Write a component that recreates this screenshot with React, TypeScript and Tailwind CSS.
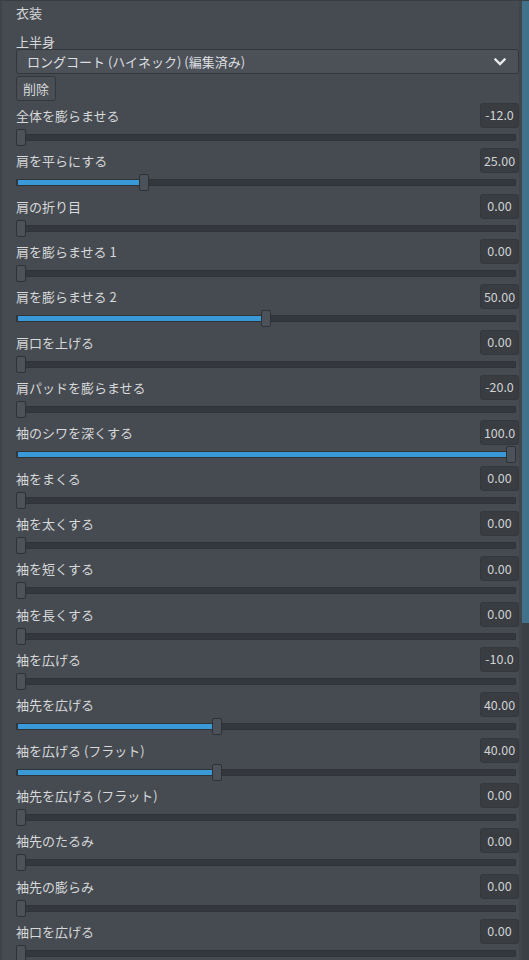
import React from "react";

type Row = { label: string; value: string; pct: number };

const rows: Row[] = [
  { label: "全体を膨らませる", value: "-12.0", pct: 0 },
  { label: "肩を平らにする", value: "25.00", pct: 25 },
  { label: "肩の折り目", value: "0.00", pct: 0 },
  { label: "肩を膨らませる 1", value: "0.00", pct: 0 },
  { label: "肩を膨らませる 2", value: "50.00", pct: 50 },
  { label: "肩口を上げる", value: "0.00", pct: 0 },
  { label: "肩パッドを膨らませる", value: "-20.0", pct: 0 },
  { label: "袖のシワを深くする", value: "100.0", pct: 100 },
  { label: "袖をまくる", value: "0.00", pct: 0 },
  { label: "袖を太くする", value: "0.00", pct: 0 },
  { label: "袖を短くする", value: "0.00", pct: 0 },
  { label: "袖を長くする", value: "0.00", pct: 0 },
  { label: "袖を広げる", value: "-10.0", pct: 0 },
  { label: "袖先を広げる", value: "40.00", pct: 40 },
  { label: "袖を広げる (フラット)", value: "40.00", pct: 40 },
  { label: "袖先を広げる (フラット)", value: "0.00", pct: 0 },
  { label: "袖先のたるみ", value: "0.00", pct: 0 },
  { label: "袖先の膨らみ", value: "0.00", pct: 0 },
  { label: "袖口を広げる", value: "0.00", pct: 0 },
];

function SliderRow({ row }: { row: Row }) {
  const trackW = 500;
  const handleW = 10;
  const left = (row.pct / 100) * (trackW - handleW);
  return (
    <div className="flex flex-col h-[45.33px] shrink-0">
      <div className="flex items-center justify-between h-[25px] shrink-0">
        <span className="text-[13px] text-[#d6d8da] leading-none">{row.label}</span>
        <div className="w-[39px] h-[25px] rounded-[3px] bg-[#393d42] border border-[#34383c] flex items-center justify-center text-[12.5px] text-[#d0d2d4] leading-none">
          {row.value}
        </div>
      </div>
      <div className="relative mt-[1px] h-[17px] w-[500px] shrink-0">
        <div className="absolute left-0 right-0 top-[5px] h-[7px] bg-[#34383d] border border-[#2f3337] rounded-[1px]" />
        {row.pct > 0 && (
          <div
            className="absolute left-[2px] top-[6px] h-[5px] bg-[#3a9ad8]"
            style={{ width: `${left}px` }}
          />
        )}
        <div
          className="absolute top-0 h-[17px] w-[10px] rounded-[2px] bg-[#4c5259] border border-[#2e3236]"
          style={{ left: `${left}px` }}
        />
      </div>
    </div>
  );
}

export default function App() {
  return (
    <div
      className="w-[529px] h-[960px] overflow-hidden bg-[#464b51] flex border-t border-[#3a3e43]"
      style={{ fontFamily: '"Noto Sans CJK JP", "Noto Sans", sans-serif' }}
    >
      <div className="w-[2px] bg-[#3f4449] shrink-0" />
      <div className="flex flex-col pl-[14px] w-[517px] shrink-0">
        <div className="h-[23px] shrink-0 flex items-center text-[13px] text-[#d6d8da]">衣装</div>
        <div className="mt-[11px] h-[14px] shrink-0 flex items-center text-[13px] text-[#d6d8da]">上半身</div>
        <div className="h-[25px] shrink-0 w-[503px] rounded-[3px] bg-[#4c5158] border border-[#33373b] flex items-center justify-between pl-[10px] pr-[12px]">
          <span className="text-[13px] text-[#dcdee0] leading-none">ロングコート (ハイネック) (編集済み)</span>
          <svg width="12" height="8" viewBox="0 0 12 8">
            <path d="M1.5 1.5 L6 6 L10.5 1.5" stroke="#e6e8ea" strokeWidth="2.4" fill="none" strokeLinecap="square" />
          </svg>
        </div>
        <div className="mt-[2px] h-[25px] shrink-0 w-[40px] rounded-[3px] bg-[#4a4f56] border border-[#33373b] flex items-center justify-center text-[13px] text-[#d6d8da] leading-none">
          削除
        </div>
        <div className="mt-[2px] flex flex-col shrink-0">
          {rows.map((r, i) => (
            <SliderRow key={i} row={r} />
          ))}
        </div>
      </div>
      <div className="w-[3px] bg-[#40454a] shrink-0" />
      <div className="w-[7px] shrink-0 flex flex-col">
        <div className="h-[622px] shrink-0 bg-[#41728b]" />
        <div className="flex-1 bg-[#3b4046]" />
      </div>
    </div>
  );
}
